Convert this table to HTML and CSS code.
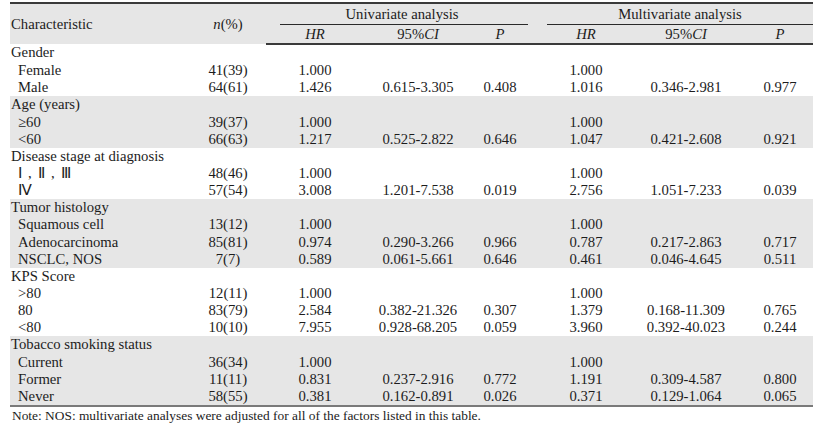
FILE: index.html
```html
<!DOCTYPE html>
<html>
<head>
<meta charset="utf-8">
<link rel="stylesheet" href="styles.css">
</head>
<body>
<div class="page">
<table class="tbl">
<colgroup>
<col class="c-char"><col class="c-n"><col class="c-hr1"><col class="c-ci1"><col class="c-p1"><col class="c-hr2"><col class="c-ci2"><col class="c-p2">
</colgroup>
<thead>
<tr class="h1">
<th rowspan="2" class="char">Characteristic</th>
<th rowspan="2" class="num"><i>n</i>(%)</th>
<th colspan="3" class="grp uni"><span>Univariate analysis</span></th>
<th colspan="3" class="grp multi"><span>Multivariate analysis</span></th>
</tr>
<tr class="h2">
<th><i>HR</i></th><th>95%<i>CI</i></th><th><i>P</i></th>
<th><i>HR</i></th><th>95%<i>CI</i></th><th class="plast"><i>P</i></th>
</tr>
</thead>
<tbody>
<tr><td class="cat">Gender</td><td></td><td></td><td></td><td></td><td></td><td></td><td class="plast"></td></tr>
<tr><td class="sub">Female</td><td>41(39)</td><td>1.000</td><td></td><td></td><td>1.000</td><td></td><td class="plast"></td></tr>
<tr><td class="sub">Male</td><td>64(61)</td><td>1.426</td><td>0.615-3.305</td><td>0.408</td><td>1.016</td><td>0.346-2.981</td><td class="plast">0.977</td></tr>
</tbody>
<tbody class="alt">
<tr><td class="cat">Age (years)</td><td></td><td></td><td></td><td></td><td></td><td></td><td class="plast"></td></tr>
<tr><td class="sub">≥60</td><td>39(37)</td><td>1.000</td><td></td><td></td><td>1.000</td><td></td><td class="plast"></td></tr>
<tr><td class="sub">&lt;60</td><td>66(63)</td><td>1.217</td><td>0.525-2.822</td><td>0.646</td><td>1.047</td><td>0.421-2.608</td><td class="plast">0.921</td></tr>
</tbody>
<tbody>
<tr><td class="cat">Disease stage at diagnosis</td><td></td><td></td><td></td><td></td><td></td><td></td><td class="plast"></td></tr>
<tr><td class="sub roman">Ⅰ , Ⅱ , Ⅲ</td><td>48(46)</td><td>1.000</td><td></td><td></td><td>1.000</td><td></td><td class="plast"></td></tr>
<tr><td class="sub roman">Ⅳ</td><td>57(54)</td><td>3.008</td><td>1.201-7.538</td><td>0.019</td><td>2.756</td><td>1.051-7.233</td><td class="plast">0.039</td></tr>
</tbody>
<tbody class="alt">
<tr><td class="cat">Tumor histology</td><td></td><td></td><td></td><td></td><td></td><td></td><td class="plast"></td></tr>
<tr><td class="sub">Squamous cell</td><td>13(12)</td><td>1.000</td><td></td><td></td><td>1.000</td><td></td><td class="plast"></td></tr>
<tr><td class="sub">Adenocarcinoma</td><td>85(81)</td><td>0.974</td><td>0.290-3.266</td><td>0.966</td><td>0.787</td><td>0.217-2.863</td><td class="plast">0.717</td></tr>
<tr><td class="sub">NSCLC, NOS</td><td>7(7)</td><td>0.589</td><td>0.061-5.661</td><td>0.646</td><td>0.461</td><td>0.046-4.645</td><td class="plast">0.511</td></tr>
</tbody>
<tbody>
<tr><td class="cat">KPS Score</td><td></td><td></td><td></td><td></td><td></td><td></td><td class="plast"></td></tr>
<tr><td class="sub">&gt;80</td><td>12(11)</td><td>1.000</td><td></td><td></td><td>1.000</td><td></td><td class="plast"></td></tr>
<tr><td class="sub">80</td><td>83(79)</td><td>2.584</td><td>0.382-21.326</td><td>0.307</td><td>1.379</td><td>0.168-11.309</td><td class="plast">0.765</td></tr>
<tr><td class="sub">&lt;80</td><td>10(10)</td><td>7.955</td><td>0.928-68.205</td><td>0.059</td><td>3.960</td><td>0.392-40.023</td><td class="plast">0.244</td></tr>
</tbody>
<tbody class="alt">
<tr><td class="cat">Tobacco smoking status</td><td></td><td></td><td></td><td></td><td></td><td></td><td class="plast"></td></tr>
<tr><td class="sub">Current</td><td>36(34)</td><td>1.000</td><td></td><td></td><td>1.000</td><td></td><td class="plast"></td></tr>
<tr><td class="sub">Former</td><td>11(11)</td><td>0.831</td><td>0.237-2.916</td><td>0.772</td><td>1.191</td><td>0.309-4.587</td><td class="plast">0.800</td></tr>
<tr><td class="sub">Never</td><td>58(55)</td><td>0.381</td><td>0.162-0.891</td><td>0.026</td><td>0.371</td><td>0.129-1.064</td><td class="plast">0.065</td></tr>
</tbody>
</table>
<p class="note">Note: NOS: multivariate analyses were adjusted for all of the factors listed in this table.</p>
</div>
</body>
</html>
```

FILE: styles.css
```css
html, body {
  margin: 0;
  padding: 0;
  background: #ffffff;
}
.page {
  padding: 2px 7px 0 10px;
  font-family: "Liberation Serif", "Times New Roman", serif;
  color: #1c1c1c;
}
.tbl {
  width: 803px;
  border-collapse: collapse;
  table-layout: fixed;
  font-size: 14.7px;
  border-top: 2px solid #3a3a3a;
  border-bottom: 2px solid #7a7a7a;
}
.c-char { width: 180px; }
.c-n { width: 76px; }
.c-hr1 { width: 98px; }
.c-ci1 { width: 108px; }
.c-p1 { width: 56px; }
.c-hr2 { width: 116px; }
.c-ci2 { width: 84px; }
.c-p2 { width: 85px; }
.tbl th, .tbl td {
  padding: 0;
  font-weight: normal;
  text-align: center;
  white-space: nowrap;
}
.tbl thead th {
  background: #e6e6e6;
}
.tbl th.char {
  text-align: left;
  padding-left: 1px;
  vertical-align: middle;
}
.tbl .h1 th.grp {
  height: 21px;
  vertical-align: bottom;
}
.tbl .grp span {
  display: block;
  line-height: 20px;
  border-bottom: 1px solid #2a2a2a;
}
.tbl .uni span {
  margin: 0 -7px 0 14px;
  padding-right: 11px;
}
.tbl .multi span {
  margin-left: 19px;
}
.tbl .h2 th {
  height: 18px;
  line-height: 18px;
  border-bottom: 2px solid #3a3a3a;
}
.tbl tbody td {
  height: 17.14px;
  line-height: 17.14px;
}
.tbl .plast {
  padding-left: 19px;
}
.tbl td.cat {
  text-align: left;
  padding-left: 1px;
}
.tbl td.sub {
  text-align: left;
  padding-left: 8px;
}
.tbl td.roman {
  letter-spacing: 1.2px;
}
.tbl tbody.alt td {
  background: #e6e6e6;
}
.note {
  margin: 1px 0 0 2px;
  font-size: 13.4px;
  line-height: 16px;
}
```
